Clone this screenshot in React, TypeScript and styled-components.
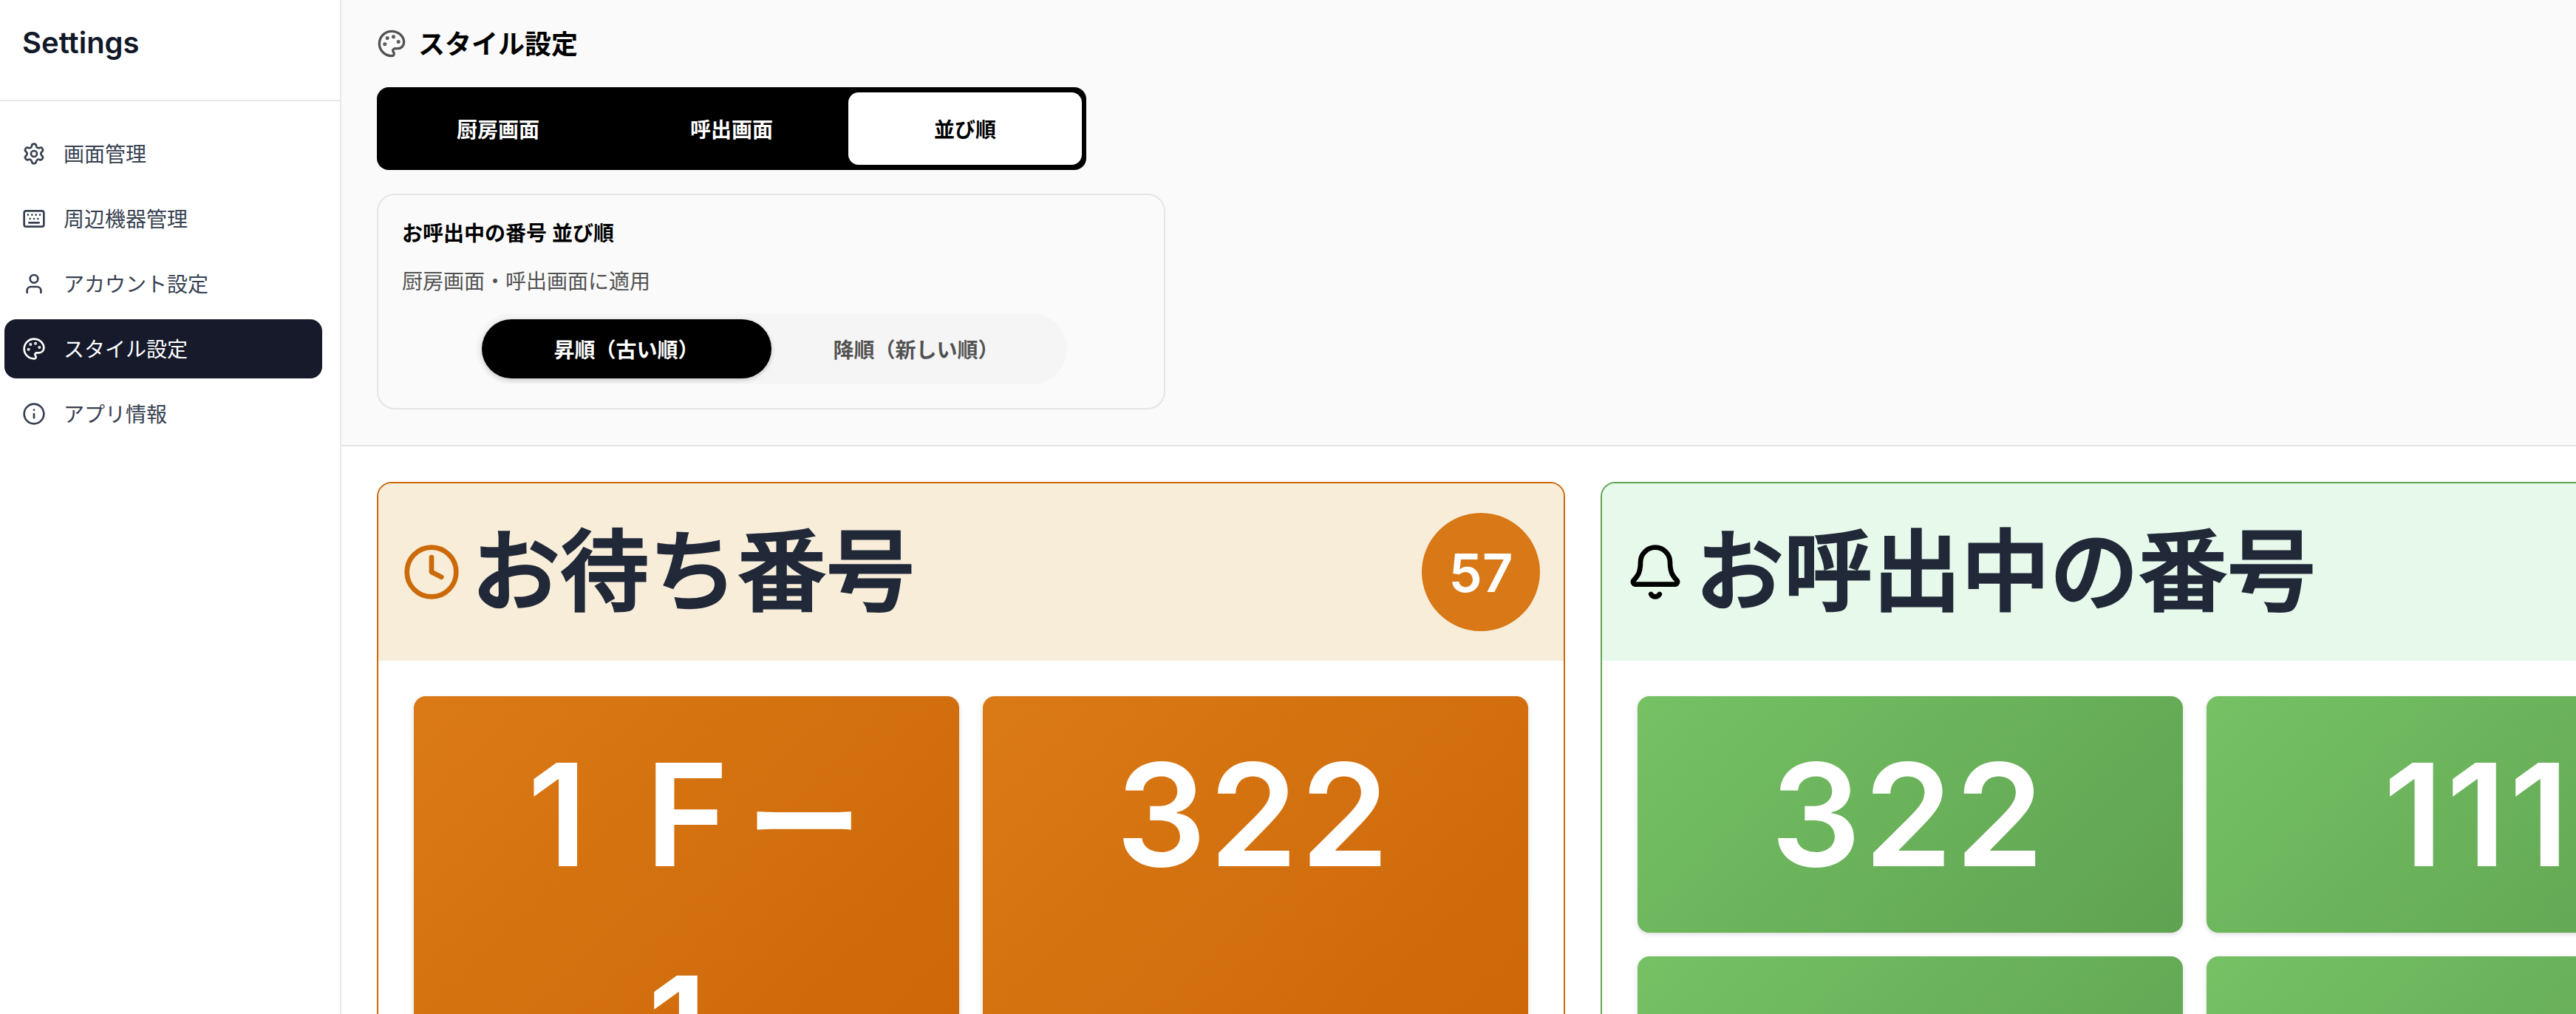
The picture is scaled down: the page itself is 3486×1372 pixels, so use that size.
import React from "react";
import styled, { createGlobalStyle } from "styled-components";
import { Settings, Keyboard, User, Palette, Info, Clock, Bell } from "lucide-react";

const cjk = `"Noto Sans CJK JP", "Noto Sans CJK SC", sans-serif`;

const Global = createGlobalStyle`
  html, body { margin: 0; padding: 0; height: 100%; overflow: hidden; background: #fff; }
  * { box-sizing: border-box; }
  #root { height: 100%; font-family: Inter, ${cjk}; }
`;

const Page = styled.div`
  display: flex;
  width: 100%;
  height: 100vh;
  overflow: hidden;
`;

const Sidebar = styled.aside`
  flex: 0 0 462px;
  border-right: 2px solid #e5e7eb;
  background: #fff;
`;

const SidebarHeader = styled.div`
  height: 137px;
  padding: 0 30px 20px;
  display: flex;
  align-items: center;
  border-bottom: 2px solid #e5e7eb;
`;

const Brand = styled.h1`
  margin: 0;
  font-size: 40px;
  font-weight: 600;
  color: #111827;
`;

const Nav = styled.nav`
  display: flex;
  flex-direction: column;
  gap: 8px;
  padding: 31px 24px 0 6px;
`;

const NavItem = styled.div<{ $active?: boolean }>`
  display: flex;
  align-items: center;
  gap: 24px;
  height: 80px;
  padding: 0 24px;
  border-radius: 16px;
  font-size: 28px;
  color: ${(p) => (p.$active ? "#fff" : "#374151")};
  background: ${(p) => (p.$active ? "#161a2b" : "transparent")};
`;

const NavLabel = styled.span`
  padding-bottom: 3px;
`;

const Main = styled.main`
  flex: 1;
  min-width: 0;
  overflow: hidden;
  display: flex;
  flex-direction: column;
`;

const Controls = styled.section`
  background: #fafafa;
  border-bottom: 2px solid #e5e5e5;
  padding: 32px 48px 48px;
`;

const SectionTitle = styled.h2`
  margin: 0 0 32px;
  display: flex;
  align-items: center;
  gap: 16px;
  height: 54px;
  font-size: 36px;
  font-weight: 700;
  color: #000;
  svg { color: #525252; }
`;

const SectionLabel = styled.span`
  padding-bottom: 4px;
`;

const Tabs = styled.div`
  display: grid;
  grid-template-columns: repeat(3, 316px);
  width: 960px;
  height: 112px;
  padding: 7px 6px;
  background: #000;
  border-radius: 16px;
`;

const Tab = styled.button<{ $active?: boolean }>`
  border: 0;
  border-radius: 14px;
  font: 700 28px ${cjk};
  background: ${(p) => (p.$active ? "#fff" : "transparent")};
  color: ${(p) => (p.$active ? "#000" : "#fff")};
`;

const Card = styled.div`
  width: 1067px;
  border: 2px solid #e5e5e5;
  border-radius: 24px;
  background: #fafafa;
  margin-top: 32px;
  padding: 32px;
`;

const CardTitle = styled.div`
  font-size: 28px;
  font-weight: 600;
  line-height: 40px;
  color: #000;
  margin-bottom: 24px;
`;

const CardHint = styled.div`
  font-size: 28px;
  line-height: 42px;
  color: #525252;
  margin-bottom: 22px;
`;

const Segment = styled.div`
  display: grid;
  grid-template-columns: 1fr 1fr;
  width: 800px;
  margin: 0 auto;
  padding: 8px;
  background: #f5f5f5;
  border-radius: 48px;
`;

const SegmentButton = styled.button<{ $active?: boolean }>`
  height: 80px;
  border: 0;
  border-radius: 40px;
  font: 700 28px ${cjk};
  background: ${(p) => (p.$active ? "#000" : "transparent")};
  color: ${(p) => (p.$active ? "#fff" : "#525252")};
  box-shadow: ${(p) => (p.$active ? "0 2px 6px rgba(0,0,0,.2)" : "none")};
`;

const Board = styled.section`
  display: grid;
  grid-template-columns: repeat(2, 1608px);
  gap: 48px;
  padding: 48px;
  background: #fff;
`;

const Panel = styled.div<{ $color: string }>`
  border: 2px solid ${(p) => p.$color};
  border-radius: 20px;
  overflow: hidden;
  background: #fff;
`;

const PanelHeader = styled.header<{ $bg: string }>`
  display: flex;
  align-items: center;
  gap: 14px;
  height: 240px;
  padding: 0 32px;
  background: ${(p) => p.$bg};
`;

const PanelTitle = styled.h3`
  flex: 1;
  margin: 0;
  font-size: 120px;
  font-weight: 500;
  -webkit-text-stroke: 3px #212939;
  color: #212939;
  line-height: 1;
`;

const Count = styled.div`
  display: flex;
  align-items: center;
  justify-content: center;
  width: 160px;
  height: 160px;
  border-radius: 50%;
  background: #d97817;
  color: #fff;
  font: 600 72px Inter, sans-serif;
`;

const Tickets = styled.div`
  display: grid;
  grid-template-columns: repeat(2, 738px);
  gap: 32px;
  padding: 48px;
`;

const Ticket = styled.div<{ $from: string; $to: string }>`
  padding: 16px 20px 16px 16px;
  min-height: 320px;
  border-radius: 16px;
  background: linear-gradient(135deg, ${(p) => p.$from}, ${(p) => p.$to});
  box-shadow: 0 2px 6px rgba(0, 0, 0, 0.15);
  color: #fff;
  text-align: center;
  font: 600 192px/288px Inter, ${cjk};
  letter-spacing: 4px;
`;

const WrappedTicket = styled(Ticket)`
  padding-right: 36px;
  word-spacing: 22px;
  text-indent: 46px;
`;

const LongMark = styled.span`
  margin-left: 20px;
  font-size: 156px;
  font-weight: 700;
  line-height: 0;
  vertical-align: 2px;
`;

const orange = { $from: "#da7a16", $to: "#cb6406" };
const green = { $from: "#75c164", $to: "#5fa251" };

export default function App() {
  return (
    <Page>
      <Global />
      <Sidebar>
        <SidebarHeader>
          <Brand>Settings</Brand>
        </SidebarHeader>
        <Nav>
          <NavItem><Settings size={32} strokeWidth={2} /><NavLabel>画面管理</NavLabel></NavItem>
          <NavItem><Keyboard size={32} strokeWidth={2} /><NavLabel>周辺機器管理</NavLabel></NavItem>
          <NavItem><User size={32} strokeWidth={2} /><NavLabel>アカウント設定</NavLabel></NavItem>
          <NavItem $active><Palette size={32} strokeWidth={2} /><NavLabel>スタイル設定</NavLabel></NavItem>
          <NavItem><Info size={32} strokeWidth={2} /><NavLabel>アプリ情報</NavLabel></NavItem>
        </Nav>
      </Sidebar>
      <Main>
        <Controls>
          <SectionTitle><Palette size={40} strokeWidth={2} /><SectionLabel>スタイル設定</SectionLabel></SectionTitle>
          <Tabs>
            <Tab>厨房画面</Tab>
            <Tab>呼出画面</Tab>
            <Tab $active>並び順</Tab>
          </Tabs>
          <Card>
            <CardTitle>お呼出中の番号 並び順</CardTitle>
            <CardHint>厨房画面・呼出画面に適用</CardHint>
            <Segment>
              <SegmentButton $active>昇順（古い順）</SegmentButton>
              <SegmentButton>降順（新しい順）</SegmentButton>
            </Segment>
          </Card>
        </Controls>
        <Board>
          <Panel $color="#cc6a0a">
            <PanelHeader $bg="#f7edd9">
              <Clock size={80} strokeWidth={2} color="#cc6a0a" />
              <PanelTitle>お待ち番号</PanelTitle>
              <Count>57</Count>
            </PanelHeader>
            <Tickets>
              <WrappedTicket {...orange}>1 F<LongMark>ー</LongMark><br />1</WrappedTicket>
              <Ticket {...orange}>322</Ticket>
            </Tickets>
          </Panel>
          <Panel $color="#5fa54f">
            <PanelHeader $bg="#e6f9ea">
              <Bell size={80} strokeWidth={2} color="#000" />
              <PanelTitle>お呼出中の番号</PanelTitle>
            </PanelHeader>
            <Tickets>
              <Ticket {...green}>322</Ticket>
              <Ticket {...green}>111</Ticket>
              <Ticket {...green} />
              <Ticket {...green} />
            </Tickets>
          </Panel>
        </Board>
      </Main>
    </Page>
  );
}
